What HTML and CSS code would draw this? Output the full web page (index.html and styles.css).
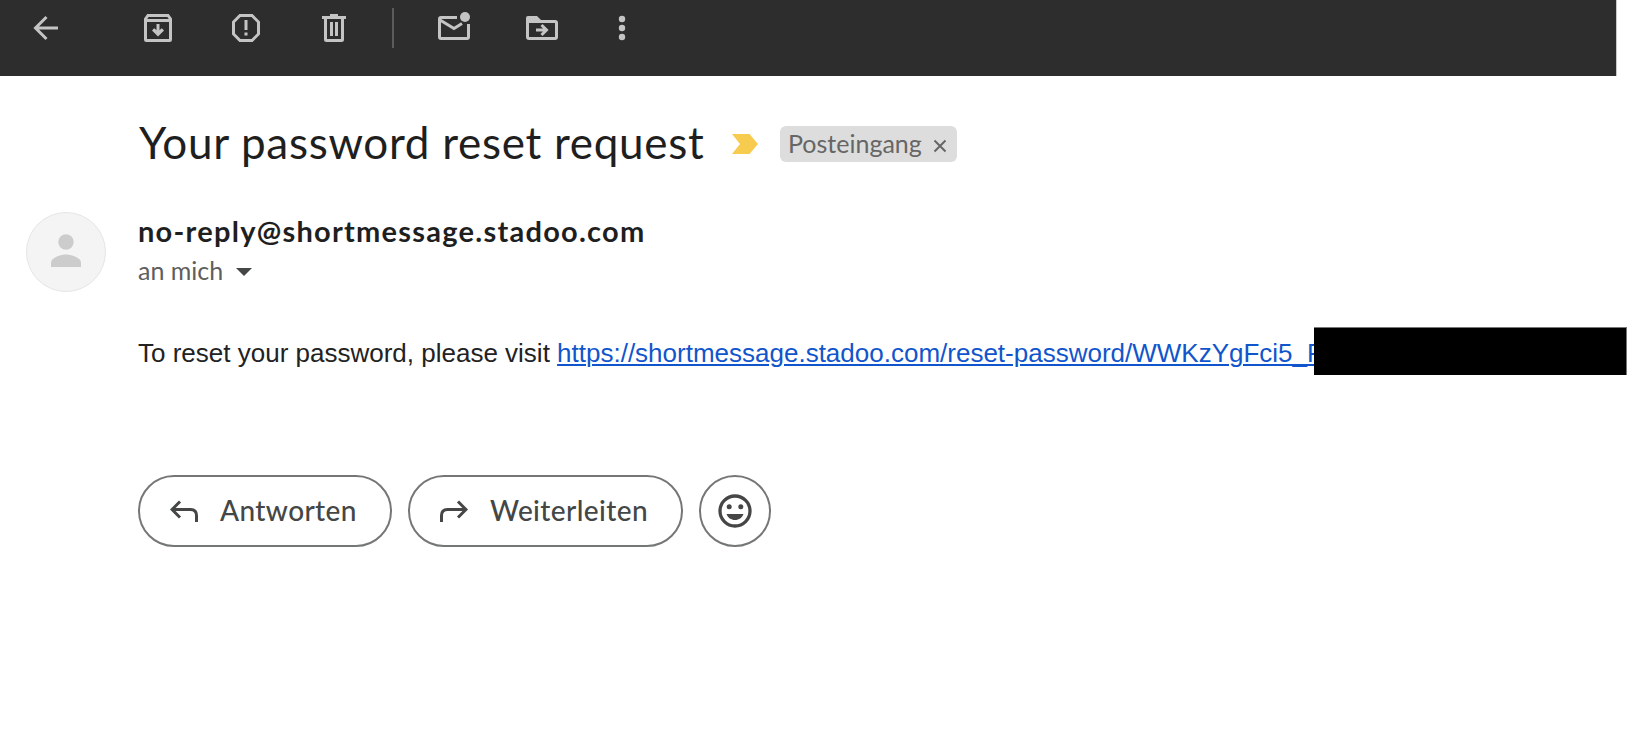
FILE: index.html
```html
<!DOCTYPE html>
<html lang="de">
<head>
<meta charset="utf-8">
<title>Your password reset request</title>
<link rel="stylesheet" href="styles.css">
</head>
<body>
<header class="toolbar">
  <svg class="tool back" viewBox="0 0 40 40"><path d="M32 20H10M20.500 9 9.500 20l11 11"/></svg>
  <svg class="tool archive" viewBox="0 0 40 40"><path d="M7.500 11v20.700q0 .8.8.8h23.400q.8 0 .8-.8V11L30 7.500H10zM8 12.500h24M20 16v9"/><path class="solid" d="M14 22.500l2.200-2.200L20 23.200l3.800-2.900L26 22.500 20 28.500z"/></svg>
  <svg class="tool spam" viewBox="0 0 40 40"><path d="M14 7.500h12l6.500 6.500v12L26 32.500H14L7.500 26V14zM20 12v10M20 24.500v3"/></svg>
  <svg class="tool trash" viewBox="0 0 40 40"><path d="M8 9.500h24M16 7.500h8M11.500 10v21.500q0 1 1 1h15q1 0 1-1V10M17.500 14v14M22.500 14v14"/></svg>
  <span class="divider"></span>
  <svg class="tool mail" viewBox="0 0 40 40"><path d="M23 9.500H7q-1.500 0-1.500 1.500v18q0 1.500 1.500 1.500h26q1.500 0 1.500-1.500V16M6 12l14 8.500 8-5"/><circle class="solid" cx="31" cy="9" r="5"/></svg>
  <svg class="tool folder" viewBox="0 0 40 40"><path d="M5.500 13.500h27.500q1.500 0 1.500 1.500v14q0 1.500-1.500 1.500H7q-1.500 0-1.500-1.500zM14 22h9M19.500 17l5 5-5 5"/><path class="solid" d="M4 14v-4q0-2 2-2h9l5 5v1z"/></svg>
  <svg class="tool more" viewBox="0 0 40 40"><g class="solid"><circle cx="20" cy="11" r="3.200"/><circle cx="20" cy="20" r="3.200"/><circle cx="20" cy="29" r="3.200"/></g></svg>
</header>
<main class="message">
  <div class="subject">
    <h1 class="title">Your password reset request</h1>
    <svg class="marker" viewBox="0 0 26 20"><path d="M0 0h17.500L26 10l-8.500 10H0l8-10z"/></svg>
    <span class="chip"><span class="chip-label">Posteingang</span><svg class="close" viewBox="0 0 14 14"><path d="M1.500 1.500l11 11M12.500 1.500l-11 11"/></svg></span>
  </div>
  <div class="sender">
    <svg class="avatar" viewBox="0 0 80 80"><circle class="disc" cx="40" cy="40" r="39.500"/><circle class="person" cx="40" cy="30" r="7.700"/><path class="person" d="M25 55v-4.500c0-4 8-8 15-8s15 4 15 8V55z"/></svg>
    <div class="details">
      <div class="address">no-reply@shortmessage.stadoo.com</div>
      <div class="recipient"><span class="to">an mich</span><svg class="caret" viewBox="0 0 16 8"><path d="M0 0h16L8 8z"/></svg></div>
    </div>
  </div>
  <div class="body">
    <p class="text">To reset your password, please visit <a class="link" href="#">https://shortmessage.stadoo.com/reset-password/WWKzYgFci5_F</a></p>
    <span class="redaction"></span>
  </div>
  <div class="actions">
    <button class="action reply"><svg class="arrow" viewBox="0 0 28 22"><path d="M10 1.500 2 9.500l8 8M2 9.500h18.500q6 0 6 6V22"/></svg><span class="label">Antworten</span></button>
    <button class="action forward"><svg class="arrow" viewBox="0 0 28 22"><path d="M18 1.500l8 8-8 8M26 9.500H7.500q-6 0-6 6V22"/></svg><span class="label">Weiterleiten</span></button>
    <button class="action emoji"><svg class="face" viewBox="0 0 34 34"><circle class="ring" cx="17" cy="17" r="15"/><circle cx="11.200" cy="12.700" r="2.500"/><circle cx="22.800" cy="12.700" r="2.500"/><path d="M8.500 20h17c-1.300 3.700-4.500 6-8.500 6s-7.200-2.300-8.500-6z"/></svg></button>
  </div>
</main>
</body>
</html>
```
FILE: styles.css
```css
body { margin: 0; background: #fff; color: #1f1f1f; font-family: Lato, sans-serif; overflow: hidden; }
.toolbar { box-sizing: border-box; display: flex; width: 1616px; height: 76px; padding: 8px 0 0 26px; background: #2d2d2d; box-shadow: 1px 0 #c8c8c8; }
.tool { width: 40px; height: 40px; fill: none; stroke: #c4c4c4; stroke-width: 3; }
.tool .solid { fill: #c4c4c4; stroke: none; }
.archive { margin-left: 72px; }
.spam, .trash, .folder { margin-left: 48px; }
.divider { width: 2px; height: 40px; margin: 0 40px 0 38px; background: #5c5c5c; }
.more { margin-left: 40px; }
.message { display: flex; flex-direction: column; }
.subject { display: flex; align-items: center; height: 60px; margin: 38px 0 0 139px; }
.title { width: 593px; margin: 0; padding-bottom: 3px; font-size: 44px; line-height: 57px; font-weight: 400; letter-spacing: .7px; white-space: nowrap; }
.marker { width: 26px; height: 20px; fill: #f7cb4d; }
.chip { box-sizing: border-box; display: flex; align-items: center; width: 177px; height: 36px; margin-left: 22px; padding-left: 8px; border-radius: 6px; background: #ddd; color: #666; }
.chip-label { width: 145px; padding-bottom: 2px; font-size: 25px; line-height: 34px; letter-spacing: 0; }
.close { width: 14px; height: 14px; margin-top: 3px; stroke: #666; stroke-width: 2; }
.sender { display: flex; gap: 32px; margin: 38px 0 0 26px; }
.avatar { width: 80px; height: 80px; }
.disc { fill: #f4f4f4; stroke: #e5e5e5; }
.person { fill: #ccc; }
.address { font-size: 29px; line-height: 37px; font-weight: 700; letter-spacing: 1.25px; white-space: nowrap; }
.recipient { display: flex; align-items: center; height: 40px; margin-top: 3px; color: #5e5e5e; }
.to { width: 98px; padding-bottom: 4px; font-size: 25px; line-height: 36px; }
.caret { width: 16px; height: 8px; fill: #444746; }
.body { display: flex; height: 48px; margin-top: 35px; padding-left: 138px; }
.text { flex: none; width: 1176px; margin: 0; white-space: nowrap; font: 26px/52px "Liberation Sans", Arial, sans-serif; color: #222; }
.link { color: #15c; text-decoration-thickness: 2px; text-underline-offset: 2px; }
/* Opaque bar laid over the end of the link. */
.redaction { box-sizing: border-box; position: relative; width: 313px; height: 48px; border: solid #777; border-width: 1px 1px 0 0; background: #000; }
.actions { display: flex; gap: 16px; margin: 100px 0 0 138px; }
.action { box-sizing: border-box; display: flex; align-items: center; height: 72px; padding: 0 0 0 30px; border: 2px solid #747775; border-radius: 36px; background: #fff; color: #444746; font: 500 28px Lato, sans-serif; }
.reply { width: 254px; }
.forward { width: 275px; }
.emoji { width: 72px; padding: 0; justify-content: center; }
.arrow { width: 28px; height: 22px; fill: none; stroke: #444746; stroke-width: 3; }
.label { margin-left: 22px; padding-bottom: 3px; letter-spacing: .4px; }
.face { width: 34px; height: 34px; fill: #444746; }
.ring { fill: none; stroke: #444746; stroke-width: 3.3; }
```
